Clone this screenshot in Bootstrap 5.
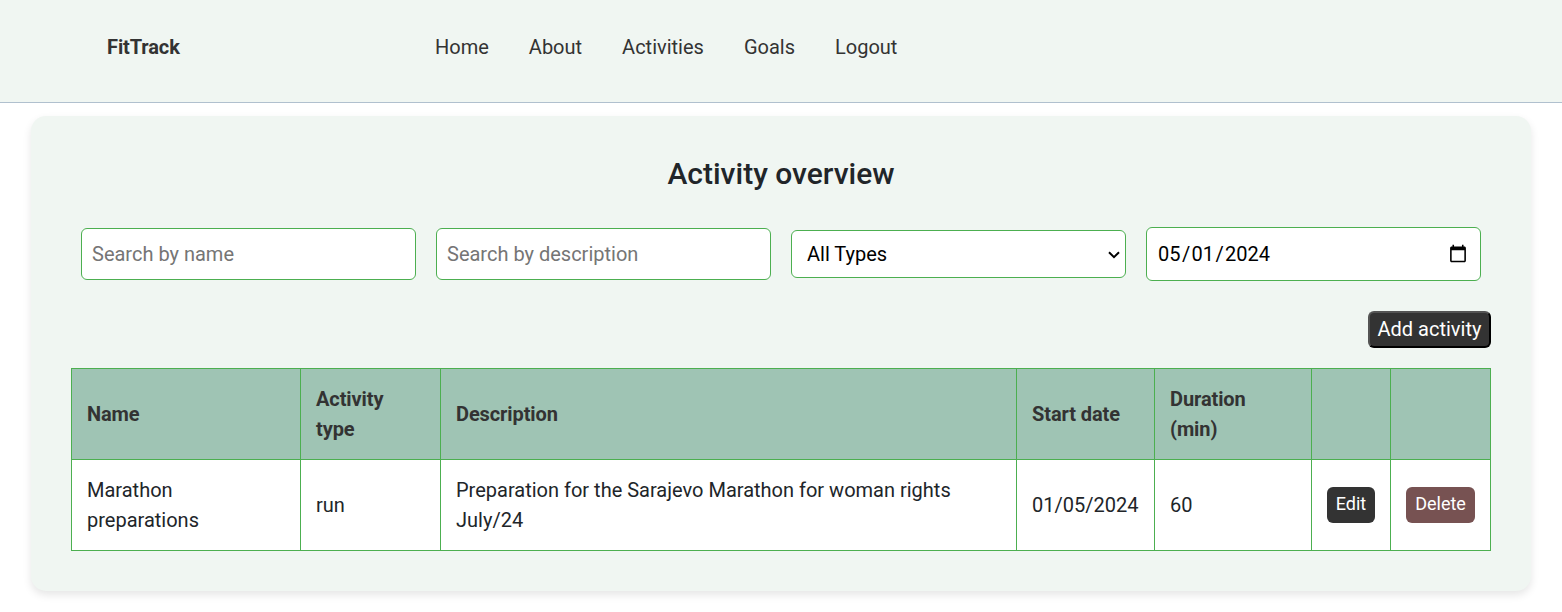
<!DOCTYPE html>
<html lang="en">
<head>
<meta charset="utf-8">
<meta name="viewport" content="width=device-width, initial-scale=1">
<title>FitTrack</title>
<link href="https://cdn.jsdelivr.net/npm/bootstrap@5.3.0/dist/css/bootstrap.min.css" rel="stylesheet">
<style>
  body { font-family: Roboto, sans-serif; font-size: 20px; font-weight: 400; line-height: 1.5; min-height: 612px; background: #fff; color: #212529; overflow: hidden; }
  .site-header { height: 103px; background: #f0f6f2; border-bottom: 1px solid #b0c0ce; padding: 32px 107px 0; }
  .brand { width: 328px; font-weight: 700; color: #333; text-decoration: none; letter-spacing: -.1px; }
  .site-links { gap: 40px; }
  .site-links a { color: #333; text-decoration: none; }
  .overview { width: 1500px; margin: 13px auto 0; padding: 40px; height: 475px; background: #f0f6f2; border-radius: 15px; box-shadow: 0 4px 8px rgba(0,0,0,.1); }
  .overview h2 { font-size: 30px; font-weight: 500; line-height: 36px; margin: 0 0 35px; }
  .filters { height: 54px; gap: 20px; padding: 0 10px; }
  .filters > * { flex: 0 0 335px; width: 335px; border: 1px solid #4caf50; border-radius: 6px; background-color: #fff; color: #000; padding: 10px; font-weight: 400; }
  .filters input::placeholder { color: #757575; }
  .filters input[type=text] { height: 52px; }
  .filters select { height: 48px; padding: 8px 24px 8px 15px; appearance: none; background: #fff url("data:image/svg+xml,%3Csvg xmlns='http://www.w3.org/2000/svg' width='12' height='8'%3E%3Cpath d='M1 1.2 6 6.2 11 1.2' fill='none' stroke='%23000' stroke-width='2'/%3E%3C/svg%3E") no-repeat right 5px top 20px; }
  .filters input[type=date] { height: 54px; }
  .filters ::-webkit-datetime-edit-month-field, .filters ::-webkit-datetime-edit-day-field, .filters ::-webkit-datetime-edit-year-field { padding: 0 1px; }
  .filters ::-webkit-datetime-edit-text { padding: 0 .4px; }
  .add-btn { height: 37px; width: 123px; margin: 30px 0 20px; padding: 0 0 2px; border: 2px outset #000; border-radius: 6px; background: #333; color: #fff; white-space: nowrap; }
  .activities { width: 1420px; table-layout: fixed; margin: 0; border-collapse: collapse; }
  .activities th, .activities td { height: 91px; padding: 0 15px; border: 1px solid #4caf50; vertical-align: middle; }
  .activities th { background: #9fc4b4; color: #333; font-weight: 700; letter-spacing: -.1px; }
  .activities td { background: #fff; }
  .act-btn { display: block; height: 36px; padding: 2px 0 4px; border: 0; border-radius: 6px; color: #fff; font-size: 18px; font-weight: 400; line-height: 30px; width: 100%; }
  .edit { background: #333; }
  .delete { background: #775252; }
</style>
</head>
<body>
<header class="site-header d-flex align-items-start">
  <a class="brand flex-shrink-0" href="#">FitTrack</a>
  <nav class="site-links d-flex">
    <a href="#">Home</a><a href="#">About</a><a href="#">Activities</a><a href="#">Goals</a><a href="#">Logout</a>
  </nav>
</header>
<main class="overview">
  <h2 class="text-center">Activity overview</h2>
  <div class="filters d-flex align-items-center">
    <input type="text" placeholder="Search by name">
    <input type="text" placeholder="Search by description">
    <select><option>All Types</option></select>
    <input type="date" value="2024-05-01">
  </div>
  <div class="d-flex justify-content-end">
    <button class="add-btn" type="button">Add activity</button>
  </div>
  <table class="activities">
    <colgroup><col style="width:229px"><col style="width:140px"><col style="width:576px"><col style="width:138px"><col style="width:157px"><col style="width:79px"><col style="width:100px"></colgroup>
    <thead>
      <tr><th>Name</th><th>Activity type</th><th>Description</th><th>Start date</th><th>Duration (min)</th><th></th><th></th></tr>
    </thead>
    <tbody>
      <tr>
        <td>Marathon preparations</td><td>run</td><td>Preparation for the Sarajevo Marathon for woman rights July/24</td><td>01/05/2024</td><td>60</td>
        <td><button class="act-btn edit" type="button">Edit</button></td>
        <td><button class="act-btn delete" type="button">Delete</button></td>
      </tr>
    </tbody>
  </table>
</main>
<script src="https://cdn.jsdelivr.net/npm/bootstrap@5.3.0/dist/js/bootstrap.bundle.min.js"></script>
</body>
</html>
